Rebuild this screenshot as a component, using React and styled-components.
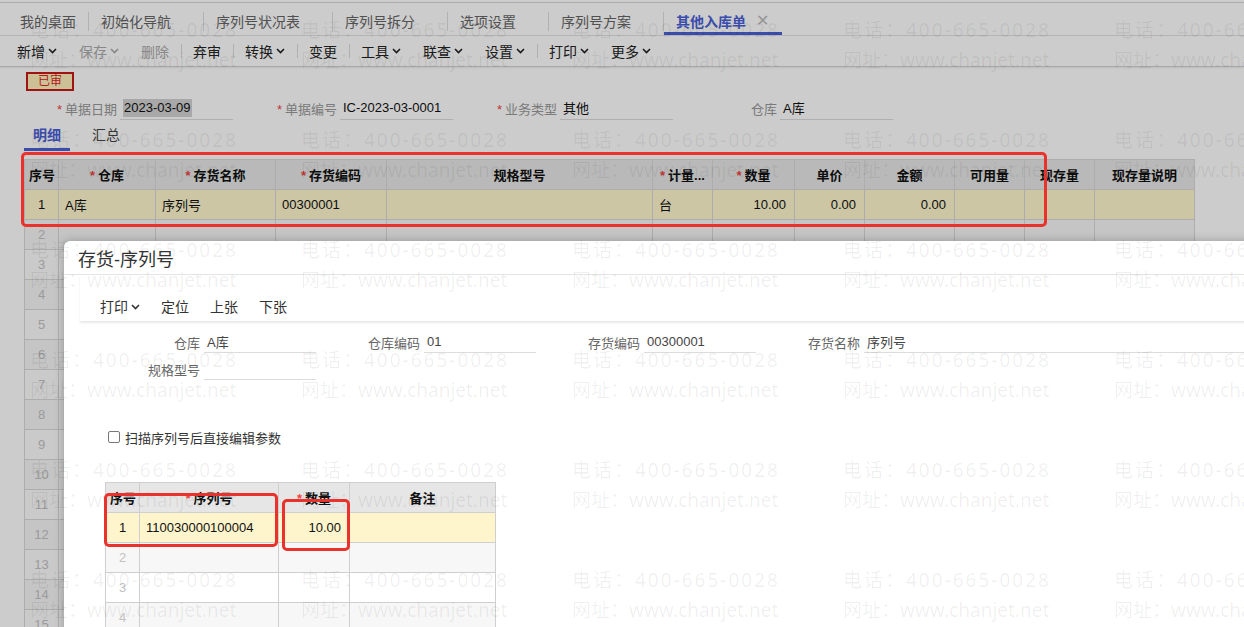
import React from 'react';
import styled, { createGlobalStyle } from 'styled-components';

const GlobalStyle = createGlobalStyle`
  html, body {
    margin: 0;
    padding: 0;
  }
  body {
    font-family: "Liberation Sans", "Noto Sans CJK SC", sans-serif;
    font-size: 13px;
    color: #333;
    overflow: hidden;
  }
`;

const Page = styled.div`
  position: relative;
  width: 1244px;
  height: 627px;
  overflow: hidden;
  background: #fff;
`;

/* ---------- main document (behind the modal) ---------- */

const TabBar = styled.div`
  display: flex;
  align-items: stretch;
  height: 32px;
  margin-top: 2px;
  padding-left: 8px;
  border-top: 1px solid #d6d6d6;
  border-bottom: 1px solid #e2e2e2;
`;

const Tab = styled.div`
  position: relative;
  display: flex;
  align-items: center;
  gap: 10px;
  padding: 3px ${p => (p.$first ? '13px' : p.$active ? '13px' : '33px')} 0 12px;
  font-size: 14px;
  color: ${p => (p.$active ? '#4a5fd8' : '#666')};
  font-weight: ${p => (p.$active ? 700 : 400)};
  box-shadow: ${p => (p.$active ? 'inset 0 -3px 0 #4a5fd8' : 'none')};

  &::after {
    content: '';
    display: ${p => (p.$active ? 'none' : 'block')};
    position: absolute;
    right: 0;
    top: 9px;
    height: 19px;
    width: 1px;
    background: #dedede;
  }
`;

const Close = styled.span`
  font-weight: 400;
  font-size: 16px;
  color: #bbb;
`;

const Toolbar = styled.div`
  display: flex;
  align-items: center;
  height: 30px;
  padding-left: 6px;
  border-bottom: 1px solid #d2d2d2;
  box-shadow: 0 1px 2px rgba(0, 0, 0, 0.08);
`;

const ToolItem = styled.span`
  display: inline-flex;
  align-items: center;
  gap: 3px;
  padding: 0 11px;
  font-size: 14px;
  color: ${p => (p.$disabled ? '#aaa' : '#222')};
`;

const ToolSep = styled.span`
  width: 1px;
  height: 14px;
  margin-left: 1px;
  background: #dcdcdc;
`;

const Stamp = styled.div`
  width: 48px;
  height: 19px;
  box-sizing: border-box;
  margin: 5px 0 0 26px;
  border: 2px solid #c81818;
  background: #fff0bc;
  color: #d22;
  font-size: 12px;
  line-height: 15px;
  text-align: center;
`;

const FormRow = styled.div`
  display: flex;
  margin: 5px 0 0 13px;
`;

const Field = styled.div`
  display: flex;
  align-items: center;
  width: 220px;
`;

const Label = styled.span`
  width: ${p => p.$w || 104}px;
  text-align: right;
  font-size: 13px;
  color: ${p => p.$color || '#999'};
  white-space: nowrap;
`;

const Star = styled.span`
  color: #f04545;
  margin-right: 3px;
`;

const Input = styled.div`
  box-sizing: border-box;
  width: ${p => (p.$grow ? 'auto' : `${p.$w || 113}px`)};
  flex: ${p => (p.$grow ? 1 : 'none')};
  height: ${p => p.$h || 24}px;
  margin-left: ${p => p.$gap || 3}px;
  padding: 0 3px;
  display: flex;
  align-items: center;
  border-bottom: 1px solid #dcdcdc;
  font-size: 13px;
  color: ${p => p.$color || '#111'};
  white-space: nowrap;
`;

const Selected = styled.span`
  background: #d2d2d2;
  line-height: 18px;
  padding: 0 1px;
`;

const SubTabs = styled.div`
  display: flex;
  gap: 13px;
  margin: 4px 0 0 24px;
`;

const SubTab = styled.div`
  height: 24px;
  line-height: 22px;
  padding: 0 9px;
  font-size: 14px;
  color: ${p => (p.$active ? '#4a5fd8' : '#444')};
  font-weight: ${p => (p.$active ? 700 : 400)};
  border-bottom: 3px solid ${p => (p.$active ? '#4a5fd8' : 'transparent')};
`;

const Grid = styled.table`
  table-layout: fixed;
  border-collapse: collapse;
  margin: ${p => p.$margin};
  font-size: 13px;
`;

const Th = styled.th`
  height: ${p => p.$h || 29}px;
  padding: 0 4px;
  background: ${p => p.$bg || '#e8e8e8'};
  border: 1px solid ${p => p.$line || '#d9d9d9'};
  font-weight: 700;
  color: #111;
  text-align: center;
  white-space: nowrap;
  overflow: hidden;
`;

const Td = styled.td`
  height: 29px;
  padding: 0 ${p => (p.$align === 'right' ? 8 : 6)}px 0 6px;
  border: 1px solid ${p => p.$line || '#d9d9d9'};
  text-align: ${p => p.$align || 'left'};
  color: ${p => (p.$muted ? '#c2c2c2' : '#111')};
  white-space: nowrap;
  overflow: hidden;
`;

const Tr = styled.tr`
  background: ${p => p.$bg};
`;

/* ---------- modal ---------- */

const Mask = styled.div`
  position: absolute;
  inset: 0;
  background: rgba(0, 0, 0, 0.2);
`;

const Dialog = styled.div`
  position: absolute;
  left: 64px;
  top: 241px;
  right: -30px;
  bottom: -30px;
  background: #fff;
  border-radius: 6px 0 0 0;
  box-shadow: 0 0 10px rgba(0, 0, 0, 0.25);
`;

const DialogHead = styled.div`
  height: 33px;
  padding-left: 14px;
  display: flex;
  align-items: center;
  border-bottom: 1px solid #e4e4e4;
  font-size: 18px;
  color: #333;
`;

const DialogBar = styled.div`
  display: flex;
  align-items: flex-end;
  height: 46px;
  padding: 0 0 4px 9.5px;
  box-sizing: border-box;
  margin-left: 16px;
  box-shadow: 0 2px 2px rgba(0, 0, 0, 0.09);
`;

const BarItem = styled.span`
  display: inline-flex;
  align-items: center;
  gap: 3px;
  padding: 0 10.5px;
  line-height: 20px;
  font-size: 14px;
  color: #333;
`;

const DForm = styled.div`
  padding-left: 32px;
  margin-top: 10px;
  display: flex;
  flex-direction: column;
  gap: 5px;
`;

const DRow = styled.div`
  display: flex;
`;

const CheckRow = styled.label`
  display: flex;
  align-items: center;
  gap: 5px;
  margin: 48px 0 0 44px;
  height: 18px;
  font-size: 13px;
  color: #333;
`;

const Box = styled.span`
  width: 12px;
  height: 12px;
  box-sizing: border-box;
  border: 1px solid #777;
  border-radius: 2px;
  background: #fff;
`;

/* ---------- overlays ---------- */

const Watermark = styled.div`
  position: absolute;
  inset: 0;
  pointer-events: none;
  display: grid;
  grid-template-columns: repeat(5, 271px);
  grid-auto-rows: 110px;
  padding: 15px 0 0 30px;
  font-family: "Noto Sans", "Noto Sans CJK SC", sans-serif;
  font-size: 19px;
  line-height: 30px;
  color: rgba(0, 0, 0, 0.065);
  white-space: nowrap;
`;

const Mark = styled.div`
  display: flex;
  flex-direction: column;
`;

const MarkLine = styled.span`
  letter-spacing: ${p => (p.$wide ? '2px' : '0')};
`;

const Annot = styled.div`
  position: absolute;
  box-sizing: border-box;
  border: 3px solid #e8322b;
  border-radius: 5px;
  pointer-events: none;
`;

const Chevron = () => (
  <svg width="9" height="6" viewBox="0 0 9 6">
    <path d="M1 1l3.5 3.5L8 1" fill="none" stroke="currentColor" strokeWidth="1.6" />
  </svg>
);

const tabs = ['我的桌面', '初始化导航', '序列号状况表', '序列号拆分', '选项设置', '序列号方案'];

const tools = [
  { t: '新增', dd: true },
  { t: '保存', dd: true, off: true },
  { t: '删除', off: true, sep: true },
  { t: '弃审', sep: true },
  { t: '转换', dd: true, sep: true },
  { t: '变更', sep: true },
  { t: '工具', dd: true },
  { t: '联查', dd: true },
  { t: '设置', dd: true, sep: true },
  { t: '打印', dd: true },
  { t: '更多', dd: true },
];

const mainCols = [
  { t: '序号', w: 34 },
  { t: '仓库', w: 97, req: true },
  { t: '存货名称', w: 120, req: true },
  { t: '存货编码', w: 111, req: true },
  { t: '规格型号', w: 266 },
  { t: '计量...', w: 60, req: true },
  { t: '数量', w: 82, req: true },
  { t: '单价', w: 70 },
  { t: '金额', w: 90 },
  { t: '可用量', w: 70 },
  { t: '现存量', w: 70 },
  { t: '现存量说明', w: 100 },
];

const mainRow = ['1', 'A库', '序列号', '00300001', '', '台', '10.00', '0.00', '0.00', '', '', ''];
const mainAlign = ['center', 'left', 'left', 'left', 'left', 'left', 'right', 'right', 'right', 'left', 'left', 'left'];

const snCols = [
  { t: '序号', w: 34 },
  { t: '序列号', w: 139, req: true },
  { t: '数量', w: 71, req: true },
  { t: '备注', w: 146 },
];

const marks = Array.from({ length: 30 });

export default function App() {
  return (
    <Page>
      <GlobalStyle />

      <TabBar>
        {tabs.map((t, i) => (
          <Tab key={t} $first={i === 0}>{t}</Tab>
        ))}
        <Tab $active>
          其他入库单<Close>✕</Close>
        </Tab>
      </TabBar>

      <Toolbar>
        {tools.map(it => (
          <React.Fragment key={it.t}>
            <ToolItem $disabled={it.off}>
              {it.t}
              {it.dd && <Chevron />}
            </ToolItem>
            {it.sep && <ToolSep />}
          </React.Fragment>
        ))}
      </Toolbar>

      <Stamp>已审</Stamp>

      <FormRow>
        <Field>
          <Label><Star>*</Star>单据日期</Label>
          <Input><Selected>2023-03-09</Selected></Input>
        </Field>
        <Field>
          <Label><Star>*</Star>单据编号</Label>
          <Input>IC-2023-03-0001</Input>
        </Field>
        <Field>
          <Label><Star>*</Star>业务类型</Label>
          <Input>其他</Input>
        </Field>
        <Field>
          <Label>仓库</Label>
          <Input>A库</Input>
        </Field>
      </FormRow>

      <SubTabs>
        <SubTab $active>明细</SubTab>
        <SubTab>汇总</SubTab>
      </SubTabs>

      <Grid $margin="8px 0 0 24px" style={{ width: 1170 }}>
        <colgroup>
          {mainCols.map(c => <col key={c.t} style={{ width: c.w }} />)}
        </colgroup>
        <thead>
          <tr>
            {mainCols.map(c => (
              <Th key={c.t}>{c.req && <Star>*</Star>}{c.t}</Th>
            ))}
          </tr>
        </thead>
        <tbody>
          <Tr $bg="#fff8cf">
            {mainRow.map((v, i) => (
              <Td key={i} $align={mainAlign[i]}>{v}</Td>
            ))}
          </Tr>
          {Array.from({ length: 14 }).map((_, r) => (
            <Tr key={r} $bg={r % 2 === 0 ? '#f7f7f7' : '#fdfdfd'}>
              {mainCols.map((c, i) => (
                <Td key={c.t} $align={i === 0 ? 'center' : 'left'} $muted>
                  {i === 0 ? r + 2 : ''}
                </Td>
              ))}
            </Tr>
          ))}
        </tbody>
      </Grid>

      <Mask />

      <Dialog>
        <DialogHead>存货-序列号</DialogHead>
        <DialogBar>
          <BarItem>打印<Chevron /></BarItem>
          <BarItem>定位</BarItem>
          <BarItem>上张</BarItem>
          <BarItem>下张</BarItem>
        </DialogBar>

        <DForm>
          <DRow>
            <Field>
              <Label $color="#666">仓库</Label>
              <Input $w={112} $h={22} $gap={4} $color="#444">A库</Input>
            </Field>
            <Field>
              <Label $color="#666">仓库编码</Label>
              <Input $w={112} $h={22} $gap={4} $color="#444">01</Input>
            </Field>
            <Field>
              <Label $color="#666">存货编码</Label>
              <Input $w={112} $h={22} $gap={4} $color="#444">00300001</Input>
            </Field>
            <Field style={{ flex: 1 }}>
              <Label $color="#666">存货名称</Label>
              <Input $grow $h={22} $gap={4} $color="#444">序列号</Input>
            </Field>
          </DRow>
          <DRow>
            <Field>
              <Label $color="#666">规格型号</Label>
              <Input $w={112} $h={22} $gap={4} />
            </Field>
          </DRow>
        </DForm>

        <CheckRow>
          <Box />
          扫描序列号后直接编辑参数
        </CheckRow>

        <Grid $margin="36px 0 0 41px" style={{ width: 390 }}>
          <colgroup>
            {snCols.map(c => <col key={c.t} style={{ width: c.w }} />)}
          </colgroup>
          <thead>
            <tr>
              {snCols.map(c => (
                <Th key={c.t} $bg="#e6e6e6" $line="#cfcfcf">
                  {c.req && <Star>*</Star>}{c.t}
                </Th>
              ))}
            </tr>
          </thead>
          <tbody>
            <Tr $bg="#fff5cc">
              <Td $align="center" $line="#cfcfcf">1</Td>
              <Td $line="#cfcfcf">110030000100004</Td>
              <Td $align="right" $line="#cfcfcf">10.00</Td>
              <Td $line="#cfcfcf" />
            </Tr>
            {[2, 3, 4].map(n => (
              <Tr key={n} $bg={n % 2 === 0 ? '#f7f7f7' : '#fff'}>
                <Td $align="center" $line="#cfcfcf" $muted>{n}</Td>
                <Td $line="#cfcfcf" />
                <Td $line="#cfcfcf" />
                <Td $line="#cfcfcf" />
              </Tr>
            ))}
          </tbody>
        </Grid>
      </Dialog>

      <Watermark>
        {marks.map((_, i) => (
          <Mark key={i}>
            <MarkLine $wide>电话：400-665-0028</MarkLine>
            <MarkLine>网址：www.chanjet.net</MarkLine>
          </Mark>
        ))}
      </Watermark>

      <Annot style={{ left: 21, top: 152, width: 1026, height: 75 }} />
      <Annot style={{ left: 104, top: 493, width: 174, height: 54 }} />
      <Annot style={{ left: 282, top: 499, width: 68, height: 52 }} />
    </Page>
  );
}
